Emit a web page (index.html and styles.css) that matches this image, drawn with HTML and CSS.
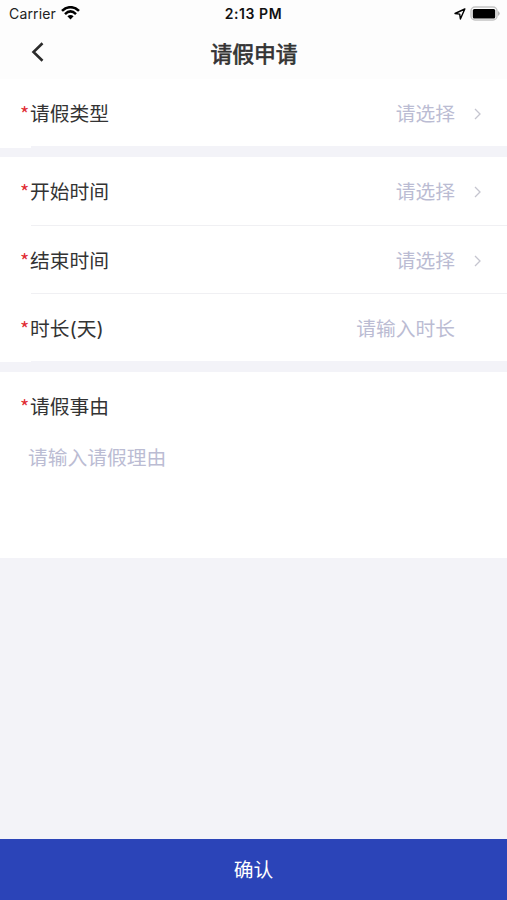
FILE: index.html
```html
<!DOCTYPE html>
<html lang="zh-CN">
<head>
<meta charset="UTF-8">
<title>请假申请</title>
<link rel="stylesheet" href="styles.css">
</head>
<body>
<header class="header">
  <div class="status">
    <div class="carrier"><span>Carrier</span>
      <svg width="19" height="14" viewBox="0 0 19 14" fill="none" stroke="#000" stroke-width="2.5"><path d="M1 4.900C6-.1 13-.1 18 4.900M4 8.100c3.500-3.400 7.500-3.400 11 0"/><path d="M6.400 10.300q3.100-2.500 6.200 0L9.500 13.500z" fill="#000" stroke="none"/></svg>
    </div>
    <time class="clock">2:13 PM</time>
    <div class="power">
      <svg width="12" height="12" viewBox="0 0 12 12" fill="none" stroke="#000" stroke-width="1.400" stroke-linejoin="round"><path d="M10.800 1 1 5.500l4.700.600.700 4.900z"/></svg>
      <svg width="31" height="15" viewBox="0 0 31 15"><rect x="1" y="1" width="26" height="13" rx="4" fill="none" stroke="#c4c4c4" stroke-width="1.500"/><rect x="2.800" y="3" width="22.400" height="9.500" rx="1.500"/><path d="M28 5q3.500 2.500 0 5z" fill="#b5b5b5"/></svg>
    </div>
  </div>
  <div class="nav">
    <svg class="back" width="14" height="20" viewBox="0 0 14 20" fill="none" stroke="#2b2b2b" stroke-width="2.600"><path d="M12.500 1.200 3.500 10l9 8.800"/></svg>
    <h1>请假申请</h1>
  </div>
</header>
<main>
  <section class="group type">
    <div class="row"><i>*</i><label>请假类型</label><span class="value">请选择</span><svg class="arrow" viewBox="0 0 8 12"><path d="m1 1 5 5-5 5"/></svg></div>
  </section>
  <section class="group times">
    <div class="row"><i>*</i><label>开始时间</label><span class="value">请选择</span><svg class="arrow" viewBox="0 0 8 12"><path d="m1 1 5 5-5 5"/></svg></div>
    <div class="row"><i>*</i><label>结束时间</label><span class="value">请选择</span><svg class="arrow" viewBox="0 0 8 12"><path d="m1 1 5 5-5 5"/></svg></div>
    <div class="row"><i>*</i><label>时长(天)</label><span class="value duration">请输入时长</span></div>
  </section>
  <section class="group reason">
    <div class="row"><i>*</i><label>请假事由</label></div>
    <p>请输入请假理由</p>
  </section>
</main>
<button class="confirm">确认</button>
</body>
</html>
```
FILE: styles.css
```css
* { box-sizing: border-box; }
body { margin: 0; height: 900px; display: flex; flex-direction: column; background: #f3f3f8; color: #333; font: 19.750px/28px Inter, "Noto Sans CJK SC", sans-serif; }
.header { height: 79px; background: #fdfdfd; }
.status { height: 27px; display: grid; grid-template-columns: 1fr auto 1fr; align-items: center; padding: 0 6px 0 9px; font-size: 14px; color: #222; }
.carrier, .power { display: flex; align-items: center; gap: 5px; }
.carrier { letter-spacing: .150px; }
.carrier svg { margin-top: -2px; }
.power { justify-content: flex-end; gap: 4px; }
.power svg { margin-top: -1px; }
.clock { font-weight: 600; letter-spacing: .550px; margin-right: 3px; color: #111; }
.nav { height: 52px; display: grid; grid-template-columns: 80px 1fr 80px; align-items: center; }
.back { margin: -3px 0 0 30px; }
h1 { margin: 2px 0 0 1px; text-align: center; font-size: 21.800px; font-weight: 400; -webkit-text-stroke: .700px #333; }
main { flex: 1; }
.group { background: #fff; margin-bottom: 10px; }
.row { height: 68px; padding: 0 25px 0 20px; display: flex; align-items: center; background: linear-gradient(#f0f0f3, #f0f0f3) 31px 100% / 100% 1px no-repeat; }
.type { height: 69px; margin-bottom: 9px; }
.type .row { height: 69px; background-image: linear-gradient(#f3f3f8, #f3f3f8); background-size: 100% 2px; }
.times { margin-bottom: 10px; padding-top: 1px; height: 205px; }
.times .row + .row { padding-top: 1px; }
.times .row:last-child { background-image: linear-gradient(#f3f3f8, #f3f3f8); }
.row i { width: 10px; flex: none; color: #e12c34; font-family: "Noto Sans CJK SC", sans-serif; font-style: normal; }
.value { margin-left: auto; color: #bbbcd3; }
.duration { margin-right: 27px; }
.arrow { width: 8px; height: 12px; margin-left: 19px; fill: none; stroke: #c5c5cf; stroke-width: 1.300; }
.reason { height: 186px; margin: 0; }
.reason .row { background: none; padding-top: 2px; }
.reason p { margin: 4px 28px; color: #bbbcd3; }
.confirm { height: 61px; border: 0; background: #2b44b8; color: #fff; font: inherit; }
```
